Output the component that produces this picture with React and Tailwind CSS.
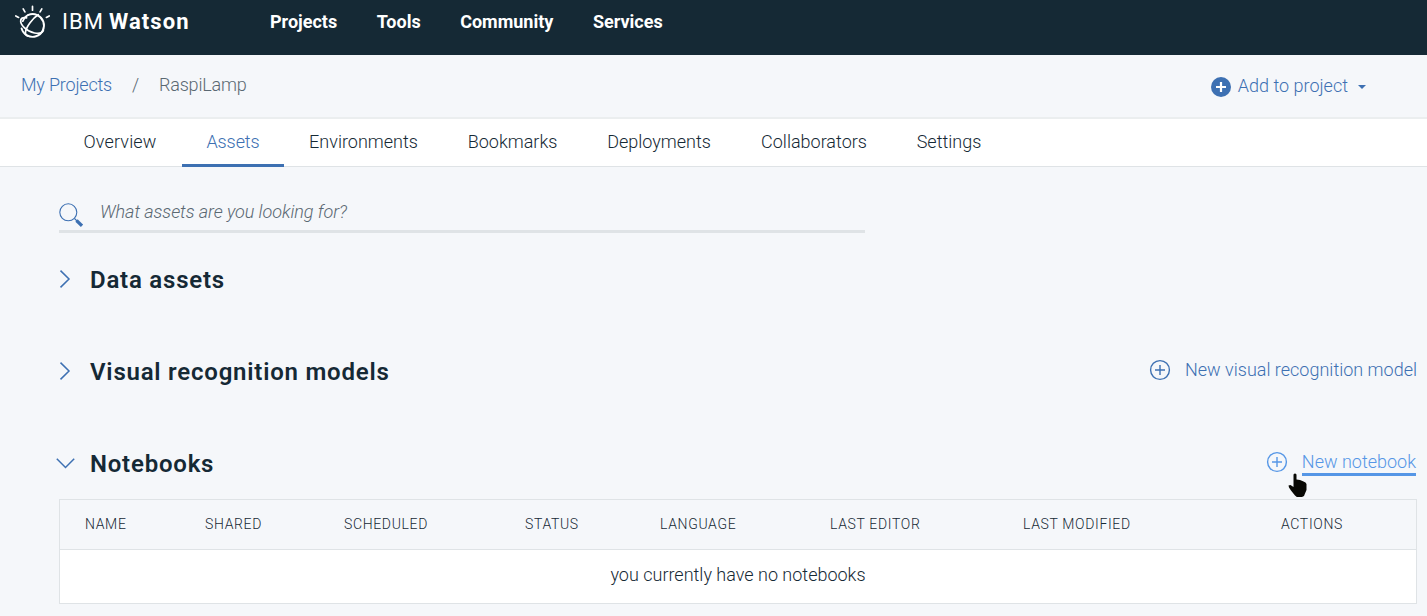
const NAV = ["Projects", "Tools", "Community", "Services"];

const TABS = [
  { label: "Overview", size: "w-[124px] tracking-[0.15px]" },
  { label: "Assets", size: "w-[102px] tracking-[-0.1px]", active: true },
  { label: "Environments", size: "w-[159px]" },
  { label: "Bookmarks", size: "w-[139px]" },
  { label: "Deployments", size: "w-[154px]" },
  { label: "Collaborators", size: "w-[156px]" },
  { label: "Settings", size: "w-[114px]" },
];

const COLUMNS = [
  { label: "NAME", size: "w-[120px]" },
  { label: "SHARED", size: "w-[139px]" },
  { label: "SCHEDULED", size: "w-[181px]" },
  { label: "STATUS", size: "w-[135px]" },
  { label: "LANGUAGE", size: "w-[170px]" },
  { label: "LAST EDITOR", size: "w-[193px]" },
  { label: "LAST MODIFIED", size: "w-[258px]" },
  { label: "ACTIONS", size: "flex-1" },
];

function WatsonLogo() {
  return (
    <svg className="h-10 w-9 shrink-0" viewBox="0 0 36 40" fill="none" stroke="#fff" strokeWidth="1.7" strokeLinecap="round">
      <path d="M18.5 6.400v3.800M9.200 8.900l1.700 3M27.800 8.900l-1.700 3M1.800 15.900l2.800 1.500M35.200 15.900l-2.800 1.500" />
      <path d="M7.600 28.500A11.400 11.400 0 1 0 14.400 14.800" strokeWidth="1.900" />
      <path d="M24.200 14.700c-5.600 3.400-11.900 12.100-12.700 17.100-.3 2.100.5 3.800 2.500 4.300" />
      <path d="M12.600 17.800c-3.100-.6-5.400.3-5.800 2.200-1 4.600 5.700 11.400 13.700 13 4.400.9 7.800-.1 8.900-2.500" />
      <path d="M14.400 14.800c-2.900 1.500-4.600 3.700-5.600 6.400" />
    </svg>
  );
}

function CirclePlus() {
  return (
    <svg className="size-[22px] shrink-0" viewBox="0 0 22 22" fill="none" stroke="currentColor" strokeWidth="1.4">
      <circle cx="11" cy="11" r="9.4" />
      <path d="M11 6v10M6 11h10" />
    </svg>
  );
}

function Chevron({ open }) {
  return (
    <svg className={open ? "-ml-1 mr-[14px] h-5 w-[21px]" : "mr-[11px] h-5 w-5"} viewBox={open ? "0 0 21 20" : "0 0 20 20"} fill="none" stroke="#3d70b2" strokeWidth="1.5">
      <path d={open ? "M1.800 5.700l8.700 8.800 8.700-8.800" : "M1.500 1.600l8.500 8.400-8.500 8.400"} />
    </svg>
  );
}

function Section({ title, open, children }) {
  return (
    <section className="flex h-[92px] items-center justify-between pr-[10px]">
      <div className="flex items-center">
        <Chevron open={open} />
        <h2 className="pt-0.5 text-2xl leading-8 font-semibold tracking-[0.78px] text-[#152935]">{title}</h2>
      </div>
      {children}
    </section>
  );
}

export default function App() {
  return (
    <div className="flex h-[616px] w-full flex-col overflow-hidden bg-[#f5f7fa] font-[Roboto,sans-serif] text-lg font-[330] whitespace-nowrap text-[#152935]">
      <header className="flex h-[55px] shrink-0 items-start bg-[#152935] pl-3.5 text-white">
        <WatsonLogo />
        <div className="ml-3 flex w-[208px] gap-[5px] pt-1.5 text-[22px] leading-8 tracking-[1.05px]">
          <span className="font-normal">IBM</span>
          <span className="font-bold">Watson</span>
        </div>
        <nav className="flex gap-[39.5px] pt-2 text-lg leading-7 font-bold">
          {NAV.map((item) => (
            <a key={item}>{item}</a>
          ))}
        </nav>
      </header>

      <div className="flex h-[62px] shrink-0 items-center justify-between pr-[61px] pb-[2px] pl-[21px]">
        <div className="flex items-center tracking-[-0.2px]">
          <a className="w-[111px] text-[#3d70b2]">My Projects</a>
          <span className="w-[27px] text-[#5a6872]">/</span>
          <span className="text-[#5a6872]">RaspiLamp</span>
        </div>
        <button className="flex items-center pt-[3px] font-[330] text-[#3d70b2]">
          <svg className="mr-[7px] size-5" viewBox="0 0 20 20">
            <circle cx="10" cy="10" r="10" fill="#3d70b2" />
            <path d="M10 5v10M5 10h10" stroke="#fff" strokeWidth="2.200" />
          </svg>
          <span className="pb-0.5">Add to project</span>
          <svg className="ml-[10px] h-1 w-2" viewBox="0 0 8 4" fill="#3d70b2">
            <path d="M0 0h8L4 4z" />
          </svg>
        </button>
      </div>

      <div className="flex h-[50px] shrink-0 border-t-2 border-b border-t-[#ebeeef] border-b-[#dfe3e6] bg-white pl-[58px]">
        {TABS.map((t) => (
          <a key={t.label} className={`${t.size} flex h-12 justify-center pt-[9px] leading-7 ${t.active ? "border-b-[3px] border-[#3d70b2] text-[#3d70b2]" : ""}`}>
            {t.label}
          </a>
        ))}
      </div>

      <main className="flex flex-1 flex-col pl-[59px]">
        <div className="mt-[27px] flex h-[39px] w-[806px] shrink-0 border-b-[3px] border-[#dfe3e6]">
          <svg className="mt-[9px] size-6 shrink-0" viewBox="0 0 24 24" fill="none" stroke="#3d70b2">
            <circle cx="9.300" cy="9.300" r="8.500" strokeWidth="1.100" />
            <path d="M15.500 15.500l2.500 2.500" strokeWidth="1.100" />
            <path d="M17.500 17.500l5.500 5.300" strokeWidth="3.200" />
          </svg>
          <span className="ml-[17px] pt-1 leading-7 font-light tracking-[-0.06px] text-[#5a6872] italic">What assets are you looking for?</span>
        </div>

        <Section title="Data assets" />
        <Section title="Visual recognition models">
          <a className="flex items-center gap-[14px] pb-0.5 text-[#3d70b2]">
            <CirclePlus />
            New visual recognition model
          </a>
        </Section>
        <Section title="Notebooks" open>
          <a className="relative mr-px flex items-center gap-[14px] pb-0.5 text-[#5596e6]">
            <CirclePlus />
            <span className="-mb-[1px] border-b-[3px] border-[#5596e6] leading-[23px]">New notebook</span>
            <svg className="absolute top-[23px] left-[22px] h-6 w-[19px]" viewBox="0 0 19 24" fill="#080804">
              <path d="M5.500 1.500Q7 -.5 8.500 1.500V6.500L12 7l3 1.200 2.500 1.300 1 1.500v6l-1.500 3.500-1 2.500-3 1.500H9.500L7 22.500 3 17.500 1 14.500.500 12.500l2-.5 3 2z" />
            </svg>
          </a>
        </Section>

        <div className="mr-[10px] -mt-[10px] h-[105px] border border-[#dfe3e6]">
          <div className="flex h-[50px] items-center border-b border-[#dfe3e6] pt-px pl-[25px] text-sm leading-5 font-[350] tracking-[0.65px]">
            {COLUMNS.map((c) => (
              <span key={c.label} className={`${c.size} -mt-0.5`}>{c.label}</span>
            ))}
          </div>
          <div className="flex h-[53px] items-center justify-center bg-white pb-[3px]">you currently have no notebooks</div>
        </div>
      </main>
    </div>
  );
}
